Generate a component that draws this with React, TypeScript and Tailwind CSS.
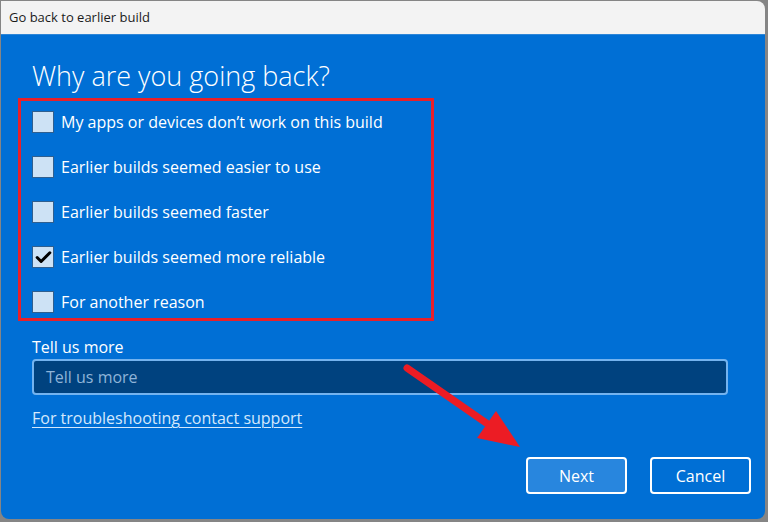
import { Check } from 'lucide-react';

const reasons = [
  { label: "My apps or devices don’t work on this build", checked: false },
  { label: 'Earlier builds seemed easier to use', checked: false },
  { label: 'Earlier builds seemed faster', checked: false },
  { label: 'Earlier builds seemed more reliable', checked: true },
  { label: 'For another reason', checked: false },
];

function Checkbox({ checked }: { checked: boolean }) {
  return (
    <span className="w-[22px] h-[22px] shrink-0 flex items-center justify-center bg-[#cde2f5] border border-[#2f5f8f]">
      {checked && <Check size={19} strokeWidth={3.8} className="text-black" />}
    </span>
  );
}

export default function App() {
  return (
    <div
      className="relative w-[768px] h-[522px] bg-[#858585] pt-px pl-px pr-[3px] pb-[3px]"
      style={{ fontFamily: '"Open Sans", "Noto Sans", sans-serif' }}
    >
      <div className="h-full flex flex-col overflow-hidden rounded-tr-[8px] rounded-b-[8px]">
        {/* Title bar */}
        <div className="h-[34px] shrink-0 flex items-center px-[8px] bg-[#f3f3f3] text-[13px] text-[#1b1b1b] border-b border-[#2d86d8]">
          Go back to earlier build
        </div>

        {/* Body */}
        <div className="flex-1 flex flex-col bg-[#006fd5] text-white pl-[31px] pr-[37px]">
          <h1 className="mt-[24px] h-[34px] leading-[34px] text-[27px] font-light">
            Why are you going back?
          </h1>

          <div className="mt-[5px] -ml-[14px] w-[416px] border-[3px] border-[#e8202a] pl-[11px] pt-[10px] pb-[5px] flex flex-col gap-[23px]">
            {reasons.map((r) => (
              <label key={r.label} className="h-[22px] flex items-center gap-[7px] text-[16px] leading-[22px]">
                <Checkbox checked={r.checked} />
                <span>{r.label}</span>
              </label>
            ))}
          </div>

          <div className="mt-[15px] h-[22px] leading-[22px] text-[16px]">Tell us more</div>
          <div className="mt-px h-[36px] rounded-[4px] border-2 border-[#74b3ef] bg-[#00427f] flex items-center px-[12px] text-[16px] text-[#8fb4d8]">
            Tell us more
          </div>

          <a className="mt-[12px] h-[22px] leading-[22px] text-[16px] text-[#d4e8fc] underline underline-offset-[3px] decoration-1 self-start cursor-pointer">
            For troubleshooting contact support
          </a>

          <div className="mt-[28px] flex justify-end gap-[23px] -mr-[23px]">
            <button className="w-[101px] h-[37px] rounded-[4px] border-2 border-white bg-[#2886de] text-[16px]">
              Next
            </button>
            <button className="w-[101px] h-[37px] rounded-[4px] border-2 border-white bg-transparent text-[16px]">
              Cancel
            </button>
          </div>
        </div>
      </div>

      {/* Red annotation arrow */}
      <svg className="absolute left-0 top-0 pointer-events-none" width="768" height="522" viewBox="0 0 768 522">
        <line x1="407" y1="368" x2="492" y2="427" stroke="#ec1c24" strokeWidth="7" strokeLinecap="round" />
        <polygon points="520,447 477,438 496,411" fill="#ec1c24" />
      </svg>
    </div>
  );
}
